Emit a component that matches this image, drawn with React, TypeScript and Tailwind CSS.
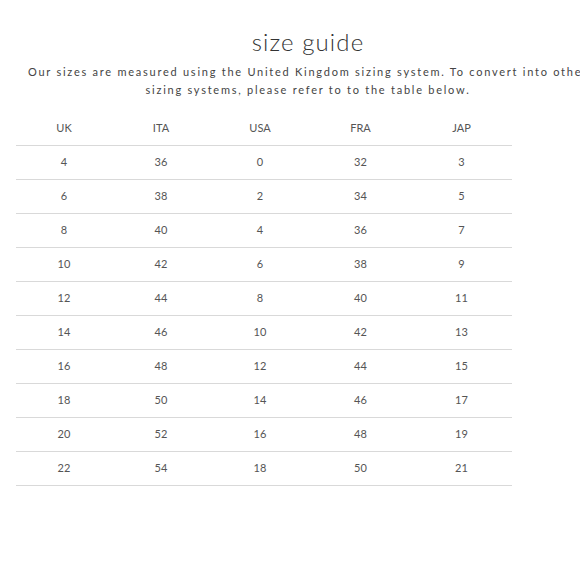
const headers = ['UK', 'ITA', 'USA', 'FRA', 'JAP']

const rows = [
  ['4', '36', '0', '32', '3'],
  ['6', '38', '2', '34', '5'],
  ['8', '40', '4', '36', '7'],
  ['10', '42', '6', '38', '9'],
  ['12', '44', '8', '40', '11'],
  ['14', '46', '10', '42', '13'],
  ['16', '48', '12', '44', '15'],
  ['18', '50', '14', '46', '17'],
  ['20', '52', '16', '48', '19'],
  ['22', '54', '18', '50', '21'],
]

const cols = 'grid grid-cols-[96px_98px_100px_101px_101px] items-center text-center'

/* size guide — intro copy is wider than the window, so the first line runs off the edge */
export default function App() {
  return (
    <div className="h-[580px] w-[580px] overflow-hidden bg-white font-['Lato','Noto_Sans',sans-serif] text-[#3a3a3a]">
      <div className="w-[616px] pt-[28px] text-center">
        <h1 className="text-[24px] font-light leading-[28px] tracking-[1.1px] text-[#333]">size guide</h1>
        <p className="mt-[7px] whitespace-nowrap text-[11px] leading-[18px] tracking-[1.75px] text-[#444]">
          Our sizes are measured using the United Kingdom sizing system. To convert into other
          <br />
          sizing systems, please refer to to the table below.
        </p>
      </div>

      <div className="ml-4 mt-[13px] w-[496px] text-[11px] text-[#555]">
        <div className={`${cols} h-[34px] border-b border-[#d9d9d9]`}>
          {headers.map((h) => (
            <span key={h}>{h}</span>
          ))}
        </div>
        {rows.map((r) => (
          <div key={r[0]} className={`${cols} h-[34px] border-b border-[#d9d9d9]`}>
            {r.map((v, i) => (
              <span key={i}>{v}</span>
            ))}
          </div>
        ))}
      </div>
    </div>
  )
}
